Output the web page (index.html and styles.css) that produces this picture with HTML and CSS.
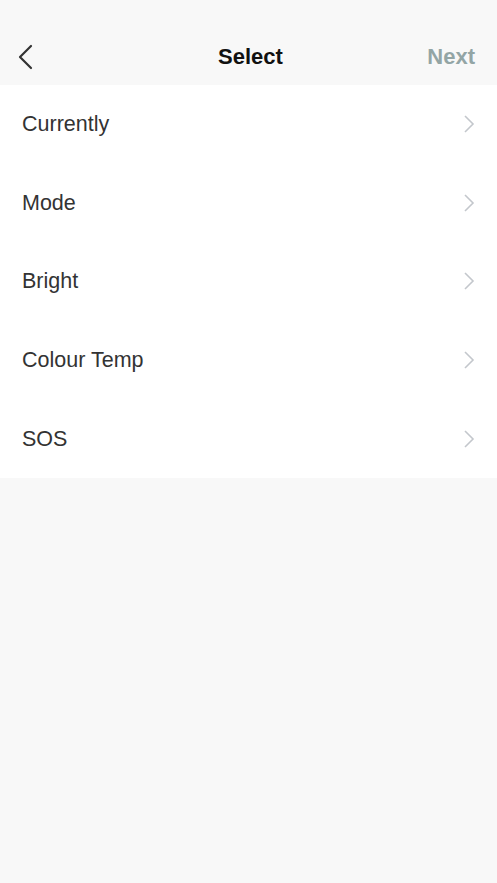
FILE: index.html
```html
<!DOCTYPE html>
<html lang="en">
<head>
  <meta charset="UTF-8">
  <title>Select</title>
  <link rel="stylesheet" href="styles.css">
</head>
<body>
  <header class="top-bar">
    <button class="back-btn" aria-label="Back">
      <svg width="18" height="26" viewBox="0 0 18 26"><path d="M15 2 L4 13 L15 24" fill="none" stroke="#333" stroke-width="2.2" stroke-linecap="round" stroke-linejoin="round"/></svg>
    </button>
    <h1 class="title">Select</h1>
    <span class="next">Next</span>
  </header>

  <ul class="option-list">
    <li class="option"><span>Currently</span><svg class="chev" width="12" height="20" viewBox="0 0 12 20"><path d="M2 2 L10 10 L2 18" fill="none" stroke="#c3c7cc" stroke-width="1.6"/></svg></li>
    <li class="option"><span>Mode</span><svg class="chev" width="12" height="20" viewBox="0 0 12 20"><path d="M2 2 L10 10 L2 18" fill="none" stroke="#c3c7cc" stroke-width="1.6"/></svg></li>
    <li class="option"><span>Bright</span><svg class="chev" width="12" height="20" viewBox="0 0 12 20"><path d="M2 2 L10 10 L2 18" fill="none" stroke="#c3c7cc" stroke-width="1.6"/></svg></li>
    <li class="option"><span>Colour Temp</span><svg class="chev" width="12" height="20" viewBox="0 0 12 20"><path d="M2 2 L10 10 L2 18" fill="none" stroke="#c3c7cc" stroke-width="1.6"/></svg></li>
    <li class="option"><span>SOS</span><svg class="chev" width="12" height="20" viewBox="0 0 12 20"><path d="M2 2 L10 10 L2 18" fill="none" stroke="#c3c7cc" stroke-width="1.6"/></svg></li>
  </ul>
</body>
</html>
```

FILE: styles.css
```css
html, body { margin: 0; padding: 0; }
body { background: #f8f8f8; font-family: "Liberation Sans", Arial, sans-serif; height: 883px; }
.top-bar { height: 85px; display: grid; grid-template-columns: 1fr auto 1fr; align-items: center; padding: 28px 22px 0 22px; box-sizing: border-box; }
.back-btn { justify-self: start; background: none; border: none; padding: 0; margin-left: -6px; display: flex; cursor: pointer; }
.title { margin: 0 0 0 4px; font-size: 22px; font-weight: bold; color: #111; }
.next { justify-self: end; font-size: 22px; font-weight: bold; color: #93a5a5; }
.option-list { list-style: none; margin: 0; padding: 0; background: #fff; }
.option { height: 78.6px; display: flex; align-items: center; justify-content: space-between; padding: 0 22px; font-size: 21.5px; color: #333; }
.option span { margin-top: 1px; }
```
